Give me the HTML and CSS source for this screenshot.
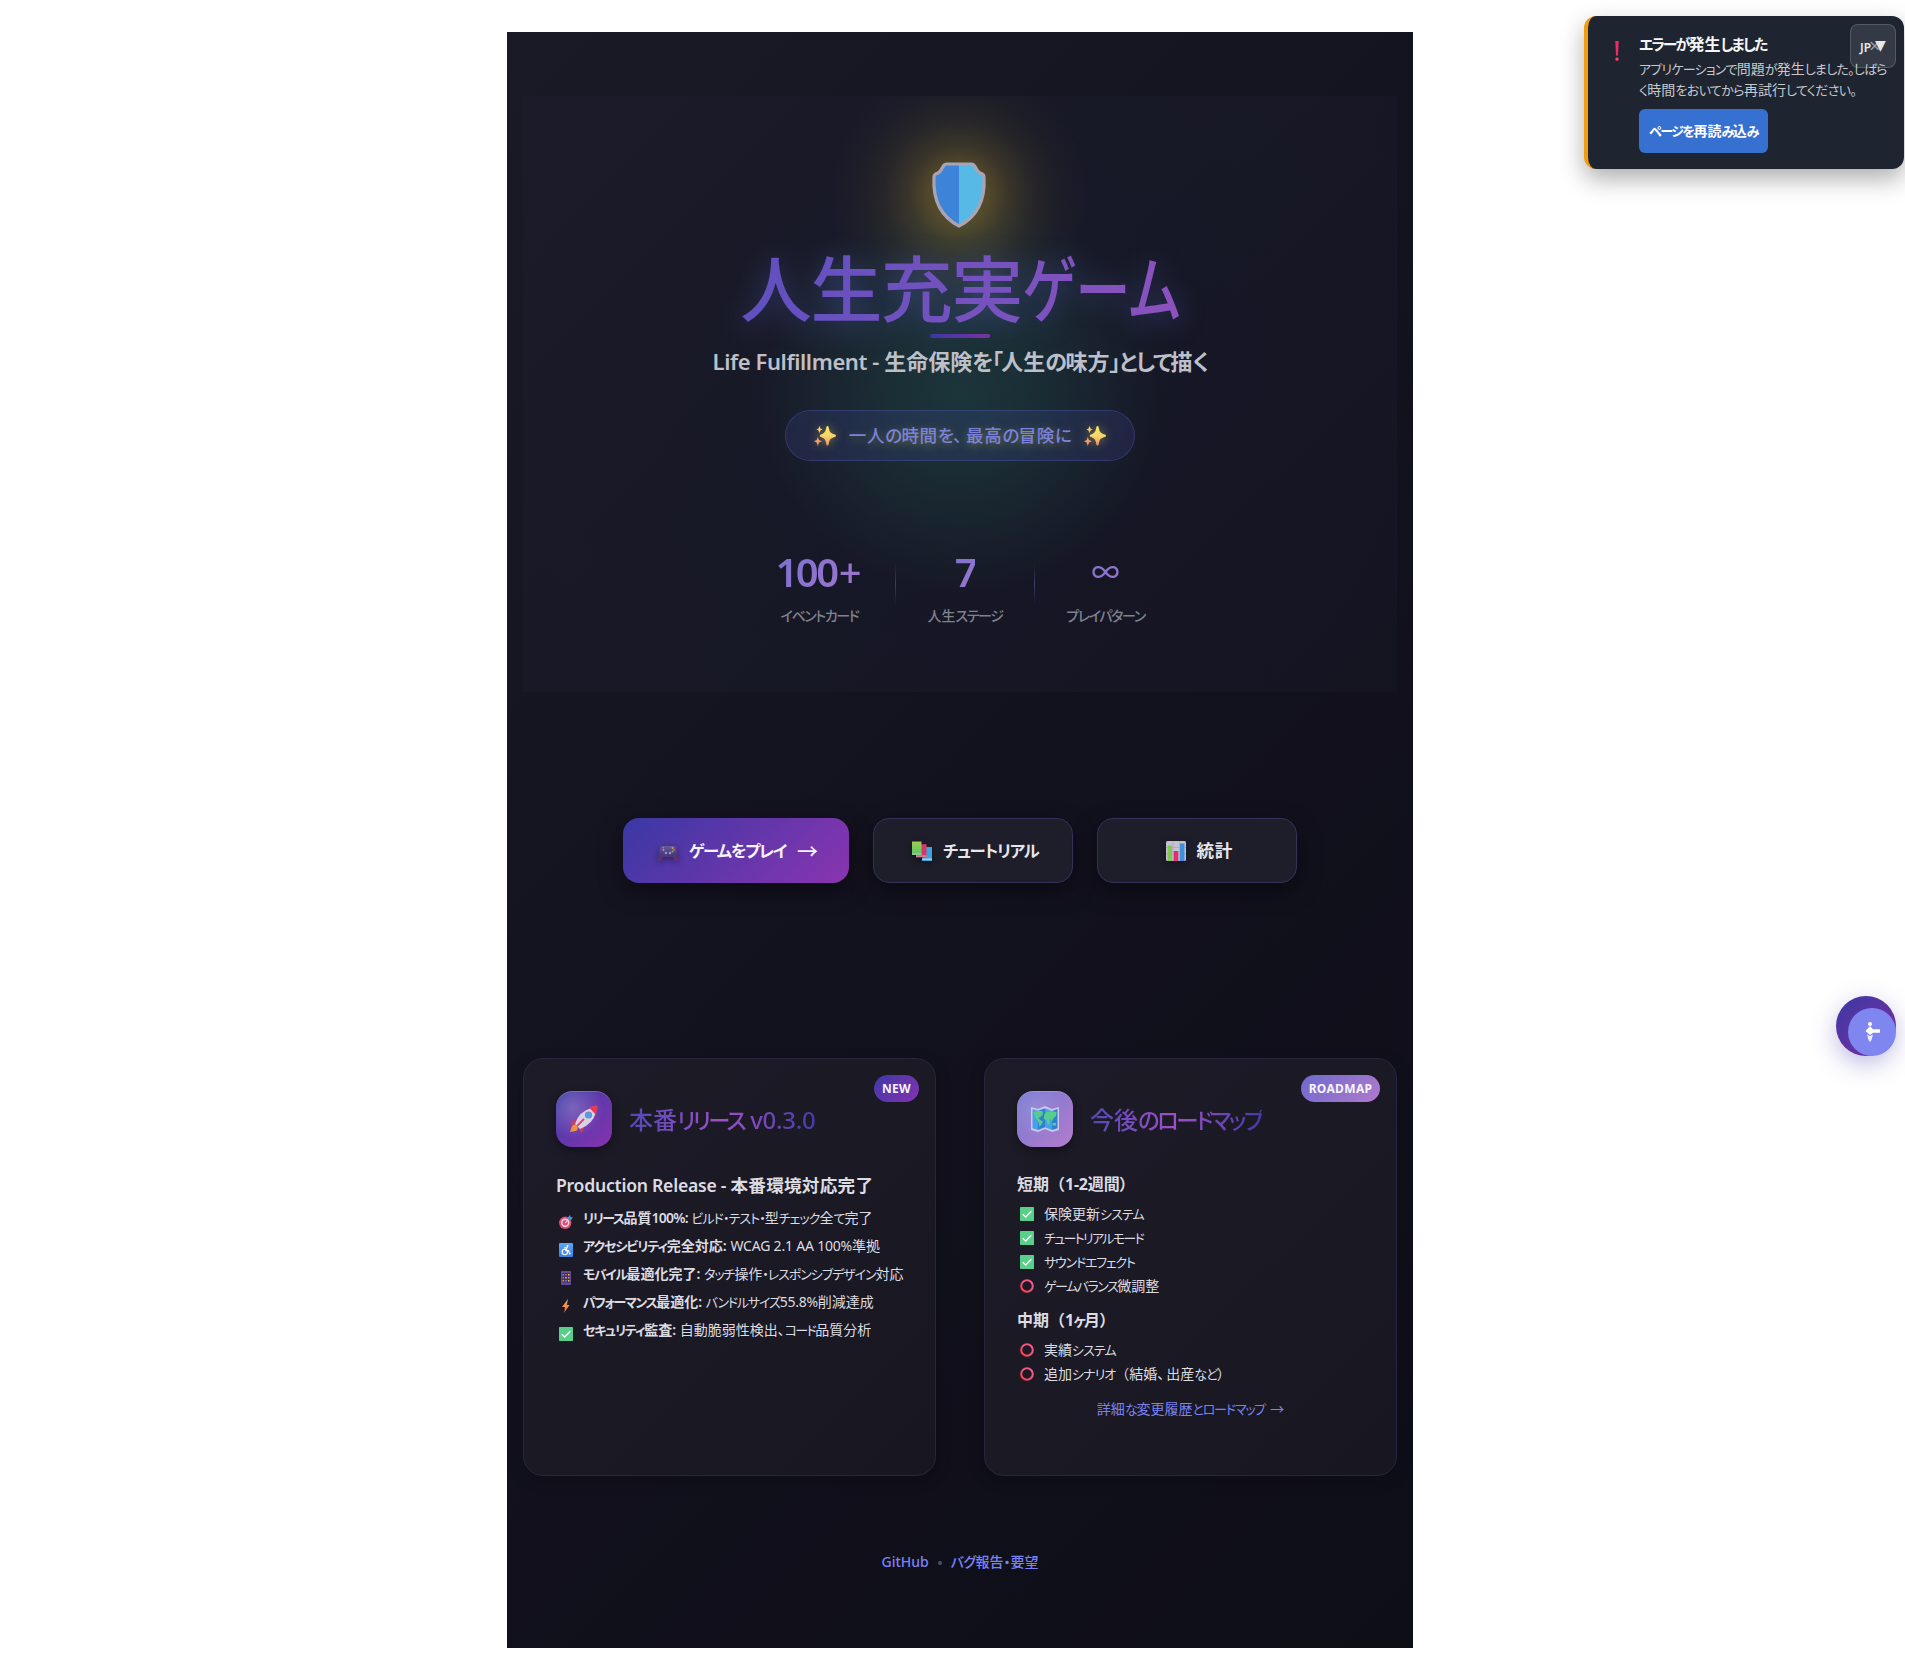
FILE: index.html
```html
<!DOCTYPE html>
<html lang="ja">
<head>
<meta charset="utf-8">
<title>人生充実ゲーム</title>
<link rel="stylesheet" href="styles.css">
</head>
<body>
<svg class="defs" aria-hidden="true">
  <defs>
    <linearGradient id="g-star" x1="0" y1="0" x2="0" y2="1"><stop offset="0" stop-color="#f6e65c"/><stop offset=".5" stop-color="#f5d76a"/><stop offset="1" stop-color="#ef8f6c"/></linearGradient>
    <linearGradient id="g-ring" x1="0" y1="1" x2="1" y2="0"><stop offset="0" stop-color="#f8404c"/><stop offset="1" stop-color="#f0609c"/></linearGradient>
    <linearGradient id="g-bolt" x1="0" y1="0" x2="0" y2="1"><stop offset="0" stop-color="#f9b04a"/><stop offset=".6" stop-color="#f58a4a"/><stop offset="1" stop-color="#e0404c"/></linearGradient>
    <linearGradient id="g-blue" x1="0" y1="0" x2="0" y2="1"><stop offset="0" stop-color="#5aa9f4"/><stop offset="1" stop-color="#3f7fe0"/></linearGradient>
    <linearGradient id="g-book" x1="0" y1="0" x2="0" y2="1"><stop offset="0" stop-color="#9bd04a"/><stop offset="1" stop-color="#5cc070"/></linearGradient>
    <linearGradient id="g-pad" x1="0" y1="0" x2="0" y2="1"><stop offset="0" stop-color="#6c5a94"/><stop offset=".55" stop-color="#4c3a78"/><stop offset="1" stop-color="#6a2c70"/></linearGradient>
  </defs>
  <symbol id="sparkles" viewBox="0 0 22 22">
    <path fill="url(#g-star)" d="M13.500 1c.8 0 1 .6 1.300 2 .9 4 1.600 4.900 5.200 6.200 1.200.4 2 .7 2 1.500s-.8 1.100-2 1.500c-3.600 1.300-4.300 2.200-5.200 6.200-.3 1.400-.5 2.100-1.300 2.100s-1-.7-1.300-2.100c-.9-4-1.600-4.900-4.600-6.200-1-.4-1.800-.7-1.800-1.500s.8-1.100 1.800-1.500c3-1.300 3.700-2.200 4.600-6.200.3-1.400.5-2 1.300-2z"/>
    <path fill="#f3c96c" d="M5.500.8 6.500 3.500 8.500 4.500 6.500 5.500 5.500 8.200 4.500 5.500 2.500 4.500 4.500 3.500z"/>
    <path fill="#ef9a70" d="M3.800 12 5 15 8 16.300 5 17.600 3.800 21 2.600 17.600 0 16.300 2.600 15z"/>
  </symbol>
  <symbol id="check" viewBox="0 0 14 14"><rect width="14" height="14" rx=".8" fill="#58d08a"/><path d="M2.800 7.200 5.700 10 11.300 4.200" fill="none" stroke="#fff" stroke-width="1.500"/></symbol>
  <symbol id="ring" viewBox="0 0 14 14"><circle cx="7" cy="7" r="5.800" fill="none" stroke="url(#g-ring)" stroke-width="2.100"/></symbol>
</svg>

<main class="page">
  <section class="hero">
    <svg class="shield" viewBox="0 0 54 66">
      <path d="M15 2H39Q42 2 43.500 5.500Q46 11 50.500 12Q52 13 52 15Q54 50 27 64Q0 50 2 15Q2 13 3.500 12Q8 11 10.500 5.500Q12 2 15 2Z" fill="#3d84d8"/>
      <path d="M27 2H39Q42 2 43.500 5.500Q46 11 50.500 12Q52 13 52 15Q54 50 27 64Z" fill="#56b9e6"/>
      <path d="M15 2H39Q42 2 43.500 5.500Q46 11 50.500 12Q52 13 52 15Q54 50 27 64Q0 50 2 15Q2 13 3.500 12Q8 11 10.500 5.500Q12 2 15 2Z" fill="none" stroke="#a9a3b4" stroke-width="3.200" stroke-linejoin="round"/>
    </svg>
    <h1 class="hero-title"><span class="title-kanji">人生充実</span><span class="title-kana">ゲーム</span></h1>
    <div class="hero-rule"></div>
    <p class="hero-sub"><span class="lat-5">Life Fulfillment - </span>生命保険<span class="k7">を「</span>人生<span class="k7">の</span>味方<span class="k7">」として</span>描<span class="k7">く</span></p>
    <div class="pill">
      <svg class="spark"><use href="#sparkles"/></svg>
      <span class="pill-text">一人<span class="k5">の</span>時間<span class="k5">を</span><span class="comma">、</span>最高<span class="k5">の</span>冒険<span class="k5">に</span></span>
      <svg class="spark"><use href="#sparkles"/></svg>
    </div>
    <div class="stats">
      <div class="stat stat-cards"><b>100<span>+</span></b><span class="stat-label k10">イベントカード</span></div>
      <i class="divider"></i>
      <div class="stat stat-stages"><b>7</b><span class="stat-label">人生<span class="k10">ステージ</span></span></div>
      <i class="divider"></i>
      <div class="stat stat-patterns"><b class="inf">∞</b><span class="stat-label k10">プレイパターン</span></div>
    </div>
  </section>

  <nav class="actions">
    <a class="btn btn-primary">
      <svg class="btn-icon btn-icon-pad" viewBox="0 0 20 20"><path fill="url(#g-pad)" d="M4 4H16Q17.500 4 18 6L20 15Q20.500 19 18.500 19Q17 19 15 15H5Q3 19 1.500 19Q-.5 19 0 15L2 6Q2.500 4 4 4Z"/><g fill="#86a0e0"><circle cx="5.500" cy="8" r="1"/><circle cx="8" cy="11" r="1.200"/><circle cx="12" cy="11" r="1.200"/><circle cx="5.500" cy="5.800" r=".7"/></g><circle cx="14.500" cy="6" r=".9" fill="#e8a050"/><circle cx="16" cy="8" r=".9" fill="#e05a70"/><circle cx="14.500" cy="9.500" r=".9" fill="#50c090"/></svg>
      <span><span class="k14">ゲームをプレイ</span></span><span class="arrow">→</span>
    </a>
    <a class="btn">
      <svg class="btn-icon" viewBox="0 0 20 20"><path fill="#38a4e0" d="M12 6H20V20H10z"/><path fill="#b8c4d8" d="M10 17.500H20V19H10z"/><path fill="#d83868" d="M8 3.500 14.500 3V16.500H4V14z"/><path fill="#c8a0b4" d="M4 14.500H14.500V15.700H4z"/><path fill="url(#g-book)" d="M0 .5H9.500V14H0z"/><path fill="#b4ccb8" d="M0 12.500H9.500V13.500H0z"/></svg>
      <span><span class="k13">チュートリアル</span></span>
    </a>
    <a class="btn">
      <svg class="btn-icon" viewBox="0 0 20 20"><rect width="20" height="20" rx="1.500" fill="#c6c2d2"/><path d="M0 6.500H20M0 13H20M7 0V20M13.500 0V20" stroke="#a9a4ba" stroke-width=".7"/><rect x="1.500" y="4.500" width="4.500" height="15.500" fill="#80c850"/><rect x="7.700" y="10" width="4.600" height="10" fill="#e03070"/><rect x="14" y="2.500" width="4.500" height="17.500" fill="#3c90dc"/></svg>
      <span class="stats-label">統計</span>
    </a>
  </nav>

  <section class="cards">
    <article class="card">
      <span class="badge badge-new">NEW</span>
      <header class="card-head">
        <div class="tile">
          <svg width="30" height="30" viewBox="0 0 30 30"><path fill="#c83c6c" d="M9 14 3 17 1 21 8 20zM16 21 14 27 12 29 9 22z"/><path fill="#f09040" d="M3 22Q6 19 8 22Q10 25 7 27L1 28Z"/><path fill="#d9d2e6" d="M6 20Q10 7 23 4L27 8Q24 20 11 25Z"/><path fill="#e63c5c" d="M20 3.500Q25 1 28.500 1.500Q29 6 26.500 10.500Z"/><circle cx="19.500" cy="11" r="3.600" fill="#8a84a8"/><circle cx="19.500" cy="11" r="2.600" fill="#4aa0ee"/><path d="M8 22 15 15" stroke="#e0447c" stroke-width="2"/></svg>
        </div>
        <h2><span>本番<span class="k17">リリース</span><span class="lat-3"> v0.3.0</span></span></h2>
      </header>
      <h3 class="release"><span class="lat-3">Production Release - </span>本番環境対応完了</h3>
      <ul class="features">
        <li><svg viewBox="0 0 14 14"><circle cx="6.200" cy="7.800" r="6.200" fill="#e04a74"/><circle cx="6.200" cy="7.800" r="4.200" fill="#f0dde6"/><circle cx="6.200" cy="7.800" r="2.800" fill="#e04a74"/><path d="M6.200 7.800 11 3" stroke="#e8e4f0" stroke-width="1.200"/><path d="M9 4.500V2.300L11 0 11.600 2 14 2.600 12 4.900H9.500z" fill="#3c94dc"/></svg><span><b><span class="k17">リリース</span>品質<span class="lat-8">100%:</span></b> <span class="k13">ビルド・テスト・</span>型<span class="k13">チェック</span>全<span class="k13">て</span>完了</span></li>
        <li><svg viewBox="0 0 14 14"><rect width="14" height="14" rx="1" fill="url(#g-blue)"/><g fill="none" stroke="#fff" stroke-width="1.100"><circle cx="5.800" cy="9" r="2.700"/><path d="M5 5 8 4.700 6.800 7.600H9.600L10.500 10.800 11.800 10.400"/></g><circle cx="8.500" cy="3" r="1" fill="#fff"/></svg><span><b><span class="k14">アクセシビリティ</span>完全対応:</b> <span class="lat-2">WCAG 2.1 AA 100%</span>準拠</span></li>
        <li><svg viewBox="0 0 14 14"><rect x="2" width="10" height="14" rx=".8" fill="#654a94"/><rect x="3" y="2" width="8" height="9.600" fill="#43306c"/><g><path fill="#58a0e8" d="M3.500 3H5V4.500H3.500zM6.200 9H7.700V10.500H6.200z"/><path fill="#e8604c" d="M6.200 3H7.700V4.500H6.200zM3.500 6H5V7.500H3.500z"/><path fill="#f0c050" d="M9 3H10.500V4.500H9zM6.200 6H7.700V7.500H6.200zM9 9H10.500V10.500H9z"/><path fill="#f09048" d="M9 6H10.500V7.500H9zM3.500 9H5V10.500H3.500z"/></g></svg><span><b><span class="k17">モバイル</span>最適化完了:</b> <span class="k14">タッチ</span>操作<span class="k14">・レスポンシブデザイン</span>対応</span></li>
        <li><svg viewBox="0 0 14 14"><path fill="url(#g-bolt)" d="M9 0 3 8H6L5 14 10.500 6H7.800z"/></svg><span><b><span class="k17">パフォーマンス</span>最適化:</b> <span class="k15">バンドルサイズ</span><span class="lat-3">55.8%</span>削減達成</span></li>
        <li><svg><use href="#check"/></svg><span><b><span class="k15">セキュリティ</span>監査:</b> 自動脆弱性検出、<span class="k18">コード</span>品質分析</span></li>
      </ul>
    </article>

    <article class="card">
      <span class="badge badge-road">ROADMAP</span>
      <header class="card-head">
        <div class="tile tile-road">
          <svg width="28" height="26" viewBox="0 0 28 26"><path fill="#cfc8e6" d="M0 1 7 3 14 0 21 3 28 1V24L21 26 14 23 7 26 0 24z"/><path fill="#45a0ee" d="M1.500 3 7 4.700V24L1.500 22.300zM14 2.200 21 5V24L14 21.200z"/><path fill="#2f80d2" d="M7 4.700 14 2.200V21.200L7 24zM21 5 26.500 3V22.300L21 24z"/><path fill="#58cc8c" d="M2.500 6 7 5 11.500 5 12 8 9.500 11 7.500 12 9 14 12 15.500 10 19 8.500 21 7.500 16 4 11zM13 9 15.500 6 20 5 25.500 6 25 10 22.500 12 21.500 15 19 12.500 18.500 18 16.500 19 15.500 14 13 13zM21.500 17H25V19.500H21.500z"/></svg>
        </div>
        <h2><span>今後<span class="k16">のロードマップ</span></span></h2>
      </header>
      <h4 class="term">短期<span class="full">（</span><span class="lat-3">1-2</span>週間）</h4>
      <ul class="tasks">
        <li><svg><use href="#check"/></svg><span>保険更新<span class="k13">システム</span></span></li>
        <li><svg><use href="#check"/></svg><span><span class="k18">チュートリアルモード</span></span></li>
        <li><svg><use href="#check"/></svg><span><span class="k15">サウンドエフェクト</span></span></li>
        <li><svg><use href="#ring"/></svg><span><span class="k17">ゲームバランス</span>微調整</span></li>
      </ul>
      <h4 class="term">中期<span class="full">（</span><span class="lat-8">1</span><span class="k18">ヶ</span>月）</h4>
      <ul class="tasks">
        <li><svg><use href="#ring"/></svg><span>実績<span class="k13">システム</span></span></li>
        <li><svg><use href="#ring"/></svg><span>追加<span class="k13">シナリオ</span><span class="full">（</span>結婚<span class="comma-s">、</span>出産<span class="k13">など</span>）</span></li>
      </ul>
      <a class="more">詳細<span class="k15">な</span>変更履歴<span class="k15">とロードマップ</span><span class="more-arrow">→</span></a>
    </article>
  </section>

  <footer class="footer"><a>GitHub</a><i></i><a><span class="k5">バグ</span>報告・要望</a></footer>
</main>

<aside class="toast">
  <svg class="bang" viewBox="0 0 4 20"><path fill="#f22a68" d="M.3 0H3.700L3 14.500H1z"/><rect x=".4" y="16.600" width="3.200" height="3.200" rx="1.200" fill="#f5455c"/></svg>
  <div class="toast-body">
    <strong><span class="k18">エラーが</span>発生<span class="k18">しました</span></strong>
    <p><span class="k12">アプリケーションで</span>問題<span class="k12">が</span>発生<span class="k12">しました。しばら</span><br><span class="k11">く</span>時間<span class="k11">をおいてから</span>再試行<span class="k11">してください。</span></p>
    <button class="reload"><span class="k17">ページを</span>再読<span class="k17">み</span>込<span class="k17">み</span></button>
  </div>
  <span class="close">×</span>
</aside>
<button class="lang"><span>JP</span><span class="caret">▼</span></button>
<div class="fab"><div class="fab-inner">
  <svg width="18" height="22" viewBox="0 0 18 22"><g fill="#fff"><circle cx="7" cy="3" r="2"/><path d="M7 5 10 8.300H17V11.700H10L7 14 2.500 10z"/><path d="M4 13.500 7 15 10 13.500 8.500 19 7 21 5.500 19z" opacity=".85"/></g></svg>
</div></div>
</body>
</html>
```
FILE: styles.css
```css
* { box-sizing: border-box; margin: 0; padding: 0; }
body {
  background: #fff;
  font-family: "Noto Sans", "Noto Sans CJK JP", sans-serif;
  font-feature-settings: "palt";
  color: #dcdce2;
  min-height: 1680px;
}
ul { list-style: none; }
i { font-style: normal; }
svg { display: block; flex: none; overflow: visible; }
.defs { position: absolute; width: 0; height: 0; }

/* Size and tracking for kana and latin runs set inside kanji text */
.k11, .k12, .k13, .k14, .k15, .k16, .k17, .k18 { font-size: .93em; line-height: 0; }
.k5 { letter-spacing: -.045em; }
.k7 { letter-spacing: -.07em; }
.k10 { letter-spacing: -.1em; }
.k11 { letter-spacing: -.047em; }
.k12 { letter-spacing: -.06em; }
.k13 { letter-spacing: -.073em; }
.k14 { letter-spacing: -.083em; }
.k15 { letter-spacing: -.093em; }
.k16 { letter-spacing: -.108em; }
.k17 { letter-spacing: -.115em; }
.k18 { letter-spacing: -.13em; }
.lat-2 { letter-spacing: -.2px; }
.lat-3 { letter-spacing: -.25px; }
.lat-5 { letter-spacing: -.4px; }
.lat-8 { letter-spacing: -.8px; }
.full { font-feature-settings: normal; }
.comma { letter-spacing: 4px; }
.comma-s { letter-spacing: 2px; }

.page {
  width: 906px;
  height: 1616px;
  margin: 0 0 0 507px;
  position: relative;
  top: 32px;
  padding: 64px 16px 0;
  background: linear-gradient(135deg, #1a1926 0%, #12111e 50%, #0e0e17 100%);
}

.hero {
  height: 596px;
  padding-top: 66px;
  display: flex;
  flex-direction: column;
  align-items: center;
  background:
    radial-gradient(circle at 436px 99px, rgba(235, 190, 40, .34) 0, rgba(230, 190, 45, .28) 30px, rgba(220, 185, 50, .17) 50px, rgba(200, 170, 50, .08) 76px, rgba(190, 160, 60, .03) 100px, transparent 130px),
    radial-gradient(circle at 50% 50%, rgba(32, 90, 80, .4) 0, rgba(32, 90, 80, .3) 70px, transparent 200px),
    radial-gradient(circle at 50% 45%, rgba(32, 48, 68, .3), rgba(32, 40, 60, .22) 40%, rgba(34, 36, 54, .2) 100%);
}
.shield { width: 54px; height: 66px; margin-right: 2px; }
.hero-title {
  margin-top: 20px;
  width: 440px;
  height: 80px;
  display: flex;
  font-size: 72px;
  line-height: 80px;
  font-weight: 500;
  white-space: nowrap;
  filter: drop-shadow(0 4px 14px rgba(100, 120, 230, .4));
}
.hero-title span { display: block; color: transparent; background-clip: text; }
.hero-title .title-kanji { letter-spacing: -1.600px; background-image: linear-gradient(100deg, #5f50c0, #7a52be); }
.hero-title .title-kana { transform: scaleX(.77); transform-origin: 0 50%; background-image: linear-gradient(100deg, #7a52be, #8d52be); }
.hero-rule { width: 60px; height: 4px; margin-top: 6px; border-radius: 2px; background: linear-gradient(90deg, #3a35a0, #7d30a2); }
.hero-sub { margin: 8px 0 1px; font-size: 22px; line-height: 30px; font-weight: 600; color: #bdc0c8; white-space: nowrap; }
.pill {
  width: 350px;
  height: 51px;
  margin-top: 33px;
  display: flex;
  align-items: center;
  justify-content: center;
  gap: 13px;
  border: 1px solid rgba(99, 102, 220, .28);
  border-radius: 26px;
  background: rgba(80, 90, 200, .16);
}
.pill-text { margin-top: -2px; font-size: 17.600px; font-weight: 500; letter-spacing: .6px; color: #7b82dc; text-shadow: 0 2px 10px rgba(220, 200, 60, .4); white-space: nowrap; }
.spark { width: 22px; height: 22px; filter: drop-shadow(0 0 5px rgba(230, 200, 60, .5)); }
.stats { margin-top: 87px; display: flex; gap: 32px; }
.stat { display: flex; flex-direction: column; align-items: center; white-space: nowrap; }
.stat-cards { width: 87px; }
.stat-stages { width: 74px; }
.stat-patterns { width: 77px; }
.stat b {
  font-size: 40px;
  line-height: 48px;
  font-weight: 600;
  letter-spacing: -2.500px;
  color: transparent;
  background: linear-gradient(135deg, #7670d0, #a377cc);
  background-clip: text;
}
.stat-cards b { margin-left: -2px; }
.stat b span { margin-left: 2px; letter-spacing: 0; font-weight: 500; }
.stat .inf { font-size: 28px; letter-spacing: 0; font-weight: 500; }
.stat-label { margin-top: 9px; font-size: 14px; line-height: 22px; font-weight: 500; color: #7f828e; }
.divider { width: 1px; height: 40px; margin-top: 16px; background: linear-gradient(180deg, transparent, #3a3d6c, transparent); }

.actions { margin-top: 126px; display: flex; justify-content: center; gap: 24px; }
.btn {
  width: 200px;
  height: 65px;
  display: flex;
  align-items: center;
  justify-content: center;
  gap: 11px;
  padding: 0 0 2px 4px;
  border: 1px solid #34325a;
  border-radius: 16px;
  background: #1e1d2a;
  box-shadow: 0 8px 24px rgba(0, 0, 0, .4);
  color: #e6e6ea;
  font-size: 17.600px;
  font-weight: 700;
  white-space: nowrap;
}
.btn-primary { width: 226.500px; border: 0; color: #f4f2fa; background: linear-gradient(135deg, #3a38a4, #8a34b0); }
.btn-icon { width: 20px; height: 20px; margin-top: 3px; filter: drop-shadow(0 2px 3px rgba(0, 0, 0, .4)); }
.btn-icon-pad { margin-top: 5px; }
.stats-label { letter-spacing: .6px; }
.arrow { font: 500 21px/24px "Noto Sans CJK JP", sans-serif; font-feature-settings: normal; }

.cards { margin-top: 175px; display: grid; grid-template-columns: repeat(2, minmax(0, 1fr)); gap: 48px; }
.card {
  position: relative;
  height: 418px;
  padding: 32px;
  border: 1px solid #28263f;
  border-radius: 20px;
  background: linear-gradient(135deg, #1c1b27, #181721);
  box-shadow: 0 4px 16px rgba(0, 0, 0, .2);
}
.badge {
  position: absolute;
  top: 16px;
  right: 16px;
  height: 27px;
  display: flex;
  align-items: center;
  justify-content: center;
  border-radius: 14px;
  font-size: 12px;
  font-weight: 700;
  letter-spacing: .35px;
  color: #f6f4fc;
}
.badge-new { width: 45px; background: linear-gradient(135deg, #3f38a8, #8433b0); }
.badge-road { width: 79px; background: linear-gradient(135deg, #6e6acc, #b07acc); }
.card-head { display: flex; align-items: center; gap: 17px; height: 56px; }
.tile {
  width: 56px;
  height: 56px;
  display: flex;
  align-items: center;
  justify-content: center;
  border-radius: 16px;
  background: radial-gradient(circle at 30% 30%, rgba(255, 255, 255, .22), transparent 55%), linear-gradient(135deg, #3f3ba8, #8633ae);
  box-shadow: 0 4px 8px rgba(0, 0, 0, .3), inset 0 1px 0 rgba(255, 255, 255, .18);
}
.tile-road { background: radial-gradient(circle at 30% 30%, rgba(255, 255, 255, .12), transparent 55%), linear-gradient(135deg, #7478d2, #b47ccc); }
.card-head h2 { margin-top: 2px; font-size: 24px; line-height: 34px; font-weight: 500; white-space: nowrap; }
.card-head h2 > span {
  display: block;
  color: transparent;
  background: linear-gradient(90deg, #5149b4, #9f50c8 50%, #433ba4);
  background-clip: text;
}
.release { margin-top: 25px; font-size: 17.600px; line-height: 26px; font-weight: 600; letter-spacing: .25px; white-space: nowrap; }
.features { margin-top: 6px; }
.features li { display: flex; gap: 10px; height: 28px; padding-left: 3px; font-size: 14px; line-height: 27px; white-space: nowrap; }
.features svg { width: 14px; height: 14px; margin-top: 11px; }
.features b { font-weight: 600; }
.term { margin-top: 25px; font-size: 16px; line-height: 24px; font-weight: 700; white-space: nowrap; }
.tasks { margin-top: 6px; }
.tasks + .term { margin-top: 10px; }
.tasks li { display: flex; align-items: center; gap: 10px; height: 24px; padding-left: 3px; font-size: 14px; white-space: nowrap; }
.tasks svg { width: 14px; height: 14px; }
.tasks li > span { margin-top: -2px; }
.more { display: block; margin-top: 12px; text-align: center; font-size: 14px; line-height: 22px; color: #7b82f0; white-space: nowrap; }
.more-arrow { margin-left: 5px; }

.footer { margin-top: 74px; height: 22px; display: flex; align-items: center; justify-content: center; gap: 9px; font-size: 14px; font-weight: 500; color: #7b82f8; white-space: nowrap; }
.footer i { width: 4px; height: 4px; margin-top: 3px; border-radius: 50%; background: #4a5066; }

.toast {
  position: absolute;
  top: 16px;
  right: 1px;
  width: 320px;
  height: 153px;
  display: flex;
  gap: 20px;
  padding: 16px 0 0 27px;
  border-left: 4px solid #f39c12;
  border-radius: 12px;
  background: #1e2430;
  box-shadow: 0 10px 24px rgba(0, 0, 0, .32);
}
.bang { width: 4px; height: 20px; margin-top: 9px; }
.toast-body { white-space: nowrap; }
.toast-body strong { display: block; height: 24px; font-size: 16px; line-height: 24px; font-weight: 700; color: #f5f5f5; }
.toast-body p { height: 42px; margin-top: 2px; font-size: 14px; line-height: 21px; color: #c6c8cc; }
.reload { display: block; width: 129px; height: 44px; margin-top: 9px; padding-bottom: 2px; border: 0; border-radius: 6px; background: #3670d0; color: #fff; font: 700 14px "Noto Sans", "Noto Sans CJK JP", sans-serif; font-feature-settings: "palt"; }
.close { position: absolute; left: 281px; top: 18px; font-size: 20px; line-height: 24px; color: #8a8e96; }
.lang {
  position: absolute;
  top: 24px;
  left: 1850px;
  width: 46px;
  height: 44px;
  display: flex;
  align-items: center;
  padding: 3px 0 0 9px;
  gap: 4px;
  border: 1px solid rgba(255, 255, 255, .16);
  border-radius: 8px;
  background: rgba(255, 255, 255, .1);
  color: #e8e8ea;
  font: 600 12px "Noto Sans", sans-serif;
}
.caret { margin-top: -5px; font: 14px "DejaVu Sans", sans-serif; }
.fab {
  position: absolute;
  left: 1836px;
  top: 996px;
  width: 60px;
  height: 60px;
  padding: 12px 0 0 12px;
  border-radius: 50%;
  background: linear-gradient(135deg, #3d38a6, #7a2f9c);
  box-shadow: 0 8px 24px rgba(70, 60, 170, .35);
}
.fab-inner { width: 48px; height: 48px; display: flex; align-items: center; justify-content: center; border-radius: 50%; background: #7f86f0; }
```
